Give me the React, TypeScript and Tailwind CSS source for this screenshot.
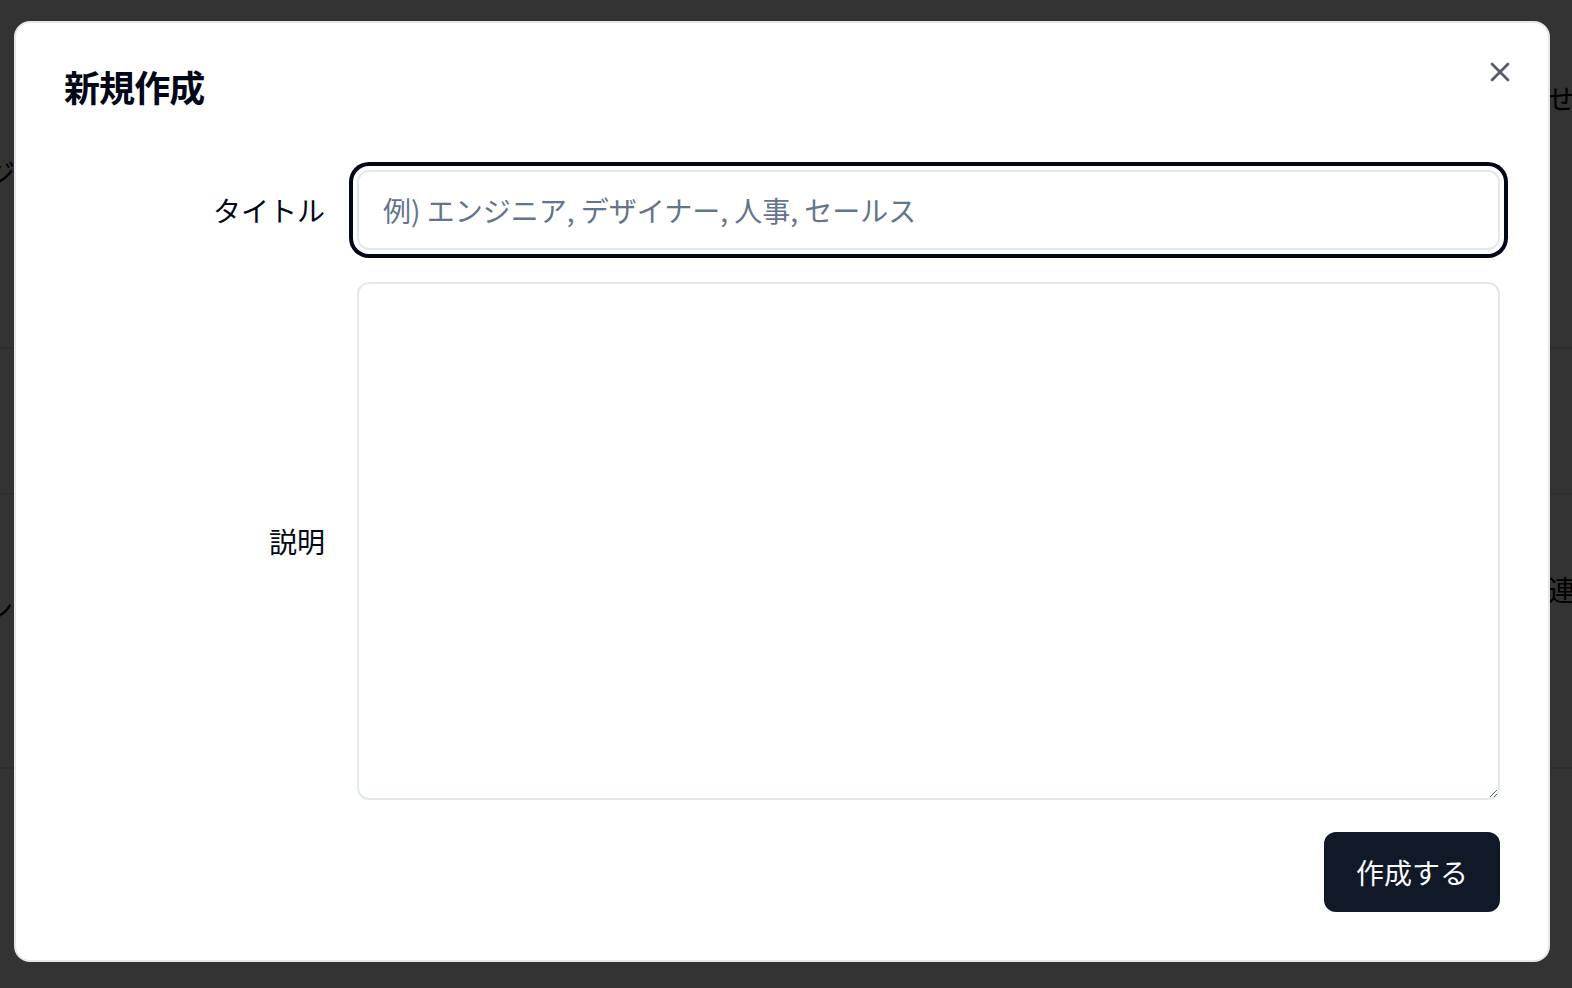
import React from 'react';
import { X } from 'lucide-react';

const font = { fontFamily: '"Noto Sans CJK JP", "Noto Sans", sans-serif' };

// faint page behind the dialog overlay
const BackgroundPage = () => (
  <div className="h-[988px] w-full overflow-hidden bg-white" style={font}>
    <div className="h-[349px] border-b-2 border-gray-200" />
    <div className="h-[146px] border-b-2 border-gray-200" />
    <div className="h-[274px] border-b-2 border-gray-200" />
  </div>
);

// bits of the page text that peek out beside the dialog
const EdgeTexts = () => (
  <div className="pointer-events-none absolute inset-0 text-[28px] text-black" style={font}>
    <div className="flex h-[112px] items-end justify-end">
      <span className="w-[25px] overflow-visible whitespace-nowrap leading-none">せい</span>
    </div>
    <div className="flex h-[74px] items-end">
      <div className="flex w-[15px] justify-end overflow-visible whitespace-nowrap leading-none">
        <span>エンジ</span>
      </div>
    </div>
    <div className="flex h-[417px] items-end justify-end">
      <span className="w-[24px] overflow-visible whitespace-nowrap leading-none">連携</span>
    </div>
    <div className="flex h-[19px] items-end">
      <div className="flex w-[13px] justify-end overflow-visible whitespace-nowrap leading-none">
        <span>デザイン</span>
      </div>
    </div>
  </div>
);

export default function App() {
  return (
    <div className="relative h-[988px] w-full overflow-hidden">
      <BackgroundPage />
      <EdgeTexts />

      {/* overlay */}
      <div className="fixed inset-0 bg-black/80" />

      {/* dialog */}
      <div
        className="fixed left-[14px] top-[21px] w-[1536px] rounded-[16px] border-2 border-gray-200 bg-white px-[48px] pb-[48px] pt-[45px] text-[#020817]"
        style={font}
      >
        <h2 className="text-[36px] font-bold leading-none tracking-tight">新規作成</h2>

        <button className="absolute right-[32px] top-[33px] flex h-8 w-8 items-center justify-center text-[#0f172a] opacity-70">
          <X size={32} strokeWidth={2} />
        </button>

        <div className="mt-[66px] flex flex-col gap-8">
          <div className="flex items-center gap-8">
            <label className="w-[261px] text-right text-[28px] leading-none">タイトル</label>
            <input
              autoFocus
              className="h-20 flex-1 rounded-[12px] border-2 border-[#e2e8f0] bg-white px-6 text-[28px] text-[#020817] caret-[#020817] outline-none ring-4 ring-[#020817] ring-offset-4 ring-offset-white placeholder:text-[#64748b]"
              placeholder="例) エンジニア, デザイナー, 人事, セールス"
            />
          </div>

          <div className="flex items-center gap-8">
            <label className="w-[261px] text-right text-[28px] leading-none">説明</label>
            <textarea className="h-[518px] flex-1 rounded-[12px] border-2 border-[#e2e8f0] bg-white px-6 py-4 text-[28px] outline-none" />
          </div>

          <div className="flex justify-end">
            <button className="h-20 rounded-[12px] bg-[#111827] px-8 text-[28px] text-[#f8fafc]">
              作成する
            </button>
          </div>
        </div>
      </div>
    </div>
  );
}
